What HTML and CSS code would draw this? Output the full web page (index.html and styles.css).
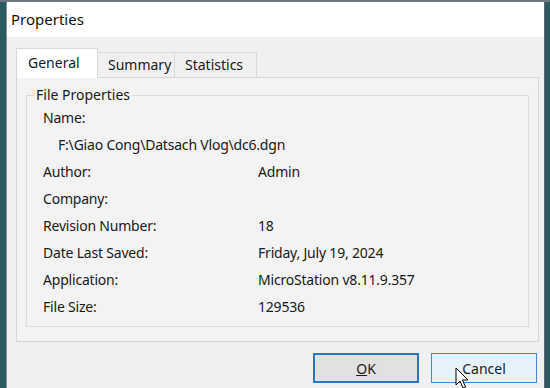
FILE: index.html
```html
<!DOCTYPE html>
<html>
<head>
<meta charset="utf-8">
<link rel="stylesheet" href="styles.css">
</head>
<body>
<div class="dialog">
  <div class="titlebar">Properties</div>
  <div class="content">
    <div class="tabs">
      <div class="tab active">General</div>
      <div class="tab">Summary</div>
      <div class="tab">Statistics</div>
    </div>
    <div class="panel">
      <fieldset class="group">
        <legend>File Properties</legend>
        <div class="row"><span class="label">Name:</span></div>
        <div class="row path">F:\Giao Cong\Datsach Vlog\dc6.dgn</div>
        <div class="row"><span class="label">Author:</span><span class="value">Admin</span></div>
        <div class="row"><span class="label">Company:</span><span class="value"></span></div>
        <div class="row"><span class="label">Revision Number:</span><span class="value">18</span></div>
        <div class="row"><span class="label">Date Last Saved:</span><span class="value">Friday, July 19, 2024</span></div>
        <div class="row"><span class="label">Application:</span><span class="value">MicroStation v8.11.9.357</span></div>
        <div class="row"><span class="label">File Size:</span><span class="value">129536</span></div>
      </fieldset>
    </div>
    <div class="buttons">
      <div class="btn default"><span class="u">O</span>K</div>
      <div class="btn hover">Cancel</div>
    </div>
  </div>
</div>
<svg class="cursor" width="14" height="24" viewBox="0 0 14 24">
  <path d="M1 1 L1 18 L5 14 L8 21 L10.5 20 L7.5 13 L13 13 Z" fill="#fff" stroke="#000" stroke-width="1" stroke-linejoin="miter"/>
</svg>
</body>
</html>
```
FILE: styles.css
```css
html, body {
  margin: 0;
  padding: 0;
}
body {
  width: 550px;
  height: 388px;
  overflow: hidden;
  background: #2b5a60;
  position: relative;
  font-family: "Noto Sans", "Liberation Sans", sans-serif;
  color: #1a1a1a;
  border-top: 2px solid #6e7880;
  box-sizing: border-box;
  padding-left: 6px;
  padding-right: 5px;
}
.dialog {
  height: 100%;
  display: flex;
  flex-direction: column;
  border-left: 1px solid #8a9096;
  border-right: 1px solid #5d6a70;
  background: #f0f0f0;
}
.titlebar {
  height: 35px;
  background: #ffffff;
  font-size: 15px;
  line-height: 34px;
  padding-left: 4px;
  color: #111;
  flex: none;
}
.content {
  flex: 1;
  display: flex;
  flex-direction: column;
  padding: 12px 6px 0 9px;
}
.tabs {
  display: flex;
  align-items: flex-end;
  height: 28px;
  position: relative;
  z-index: 1;
}
.tab {
  height: 24px;
  line-height: 24px;
  font-size: 14px;
  padding: 0 10px;
  border: 1px solid #d9d9d9;
  border-bottom: none;
  background: #f0f0f0;
  margin-left: -1px;
}
.tab.active {
  line-height: 28px;
  background: #ffffff;
  margin-left: 0;
  width: 58px;
  padding: 0 11px;
  margin-bottom: -1px;
  height: 29px;
}
.tabs .tab:nth-child(2) { width: 56px; }
.tabs .tab:nth-child(3) { width: 61px; }
.panel {
  height: 265px;
  border: 1px solid #d6d6d6;
  background: #f3f3f3;
  box-sizing: border-box;
  padding: 8px 9px 0 9px;
  width: 523px;
}
.group {
  margin: 0;
  border: 1px solid #dcdcdc;
  padding: 0 8px 7px 16px;
  min-width: 0;
  height: 241px;
  box-sizing: border-box;
}
.group legend {
  font-size: 14px;
  padding: 0 2px;
  margin-left: -9px;
  line-height: 18px;
}
.row {
  display: flex;
  height: 27px;
  align-items: center;
  font-size: 14px;
  letter-spacing: -0.2px;
}
.row.path {
  padding-left: 15px;
}
.label {
  width: 215px;
  flex: none;
}
.buttons {
  display: flex;
  justify-content: flex-end;
  gap: 12px;
  padding-top: 11px;
  padding-right: 0;
}
.btn {
  width: 106px;
  height: 30px;
  box-sizing: border-box;
  display: flex;
  align-items: center;
  justify-content: center;
  font-size: 14px;
  background: #e1e1e1;
  border: 1px solid #0078d7;
}
.btn.default {
  border: 2px solid #2a76c0;
}
.btn.hover {
  background: #e5f1fb;
  border: 1px solid #3c8ad6;
  margin-right: 1px;
}
.u {
  text-decoration: underline;
}
.cursor {
  position: absolute;
  left: 455px;
  top: 365px;
}
```
